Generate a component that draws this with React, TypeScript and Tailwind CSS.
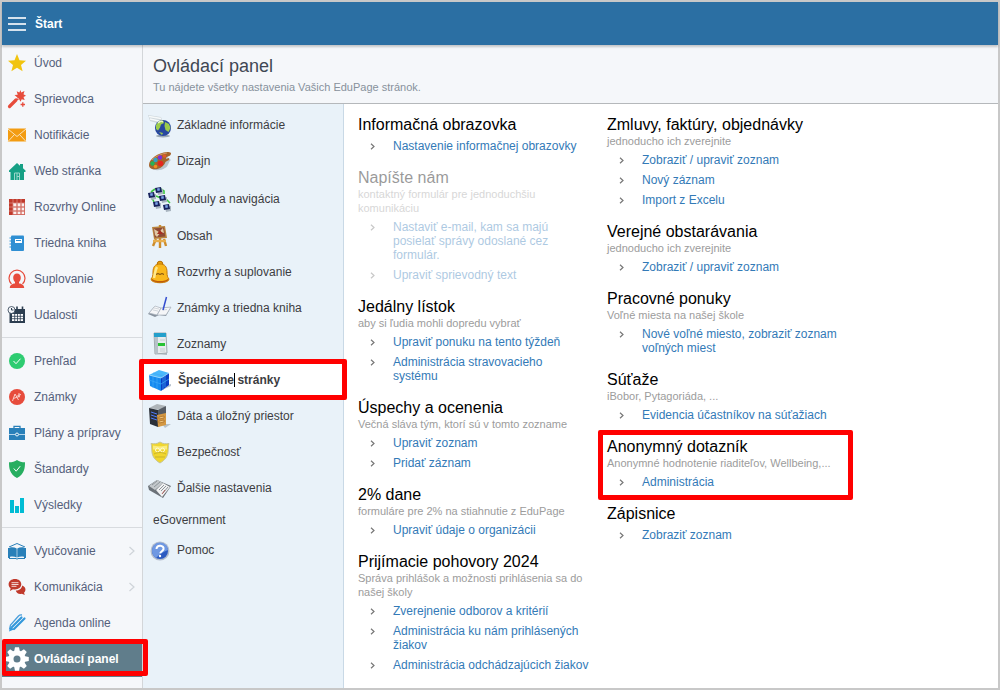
import type { ReactNode } from 'react'
import clsx from 'clsx'

type NavItem = { label: string; icon: ReactNode; active?: boolean; arrow?: boolean }
type MenuItem = { label: ReactNode; icon?: ReactNode; height: string; active?: boolean }
type Section = { title: string; desc?: string; links: string[]; muted?: boolean; marked?: boolean }

function Small({ children }: { children: ReactNode }) {
  return (
    <svg viewBox="0 0 18 18" className="h-[18px] w-[18px] shrink-0 overflow-visible" fill="none" aria-hidden="true">
      {children}
    </svg>
  )
}

function Large({ children }: { children: ReactNode }) {
  return (
    <svg viewBox="0 0 24 24" className="h-6 w-6 shrink-0 overflow-visible" fill="none" aria-hidden="true">
      {children}
    </svg>
  )
}

function Mark({ className }: { className: string }) {
  return <span className={clsx('pointer-events-none absolute z-10 rounded-[2px] border-[#f00]', className)} />
}

const teeth = [0, 45, 90, 135, 180, 225, 270, 315]

const navGroups: NavItem[][] = [
  [
    {
      label: 'Úvod',
      icon: (
        <Small>
          <path d="M9 0l2.500 6.200 6.500.5-5 4.200 1.600 6.400L9 13.800l-5.600 3.500L5 10.900 0 6.700l6.500-.5z" fill="#f1c40f" />
        </Small>
      ),
    },
    {
      label: 'Sprievodca',
      icon: (
        <Small>
          <path d="M1.500 16.500L8 10" stroke="#e74c3c" strokeWidth="3.200" strokeLinecap="round" />
          <path d="M12.500 0l.7 2.600L16.500 1l-1 3.300 2.500 1.500-2.500 1.200 1.200 3-3-.8-1.200 2.600-1.300-2.500-3 1.200.9-3.200L6.500 5l3.200-.3L8.700 1.300l2.600 1.200z" fill="#e74c3c" />
          <path d="M9 7.500l1.500 1.500" stroke="#f5f7fa" />
          <path d="M14.800 12.300v4.400M12.600 14.500H17" stroke="#e74c3c" strokeWidth="1.300" />
        </Small>
      ),
    },
    {
      label: 'Notifikácie',
      icon: (
        <Small>
          <path d="M0 2.500h18v13H0z" fill="#f39c12" />
          <path d="M0 3l9 7.500L18 3M0 15.500l6.500-7M18 15.500l-6.500-7" stroke="#fbe3b9" strokeWidth="1" />
        </Small>
      ),
    },
    {
      label: 'Web stránka',
      icon: (
        <Small>
          <path d="M1 8.500L9 1l3 2.700V2h3v4.300L17.500 8.500v1.500H16v8H2.500V10H1z" fill="#16a085" />
          <path d="M6.500 18v-7h5v7M9 11v7M9 14.500h2.500" stroke="#9bd6c9" strokeWidth="1" />
        </Small>
      ),
    },
    {
      label: 'Rozvrhy Online',
      icon: (
        <Small>
          <path d="M1 1h16v16H1z" fill="#f3d5d2" />
          <path d="M1 1h16v4H1zM1 1h4v16H1z" fill="#c0392b" />
          <path d="M1 5h16M1 9h16M1 13h16M5 1v16M9 1v16M13 1v16" stroke="#e3a39c" strokeWidth=".6" />
          <path d="M6 6h2v2H6zM10 6h2v2h-2zM14 6h2v2h-2zM6 10h2v2H6zM10 10h2v2h-2zM14 10h2v2h-2zM6 14h2v2H6zM10 14h2v2h-2zM14 14h2v2h-2z" fill="#faf0ef" />
          <path d="M5 9h12M5 13h12M9 5v12M13 5v12M16.500 5v12M5 16.500h12" stroke="#d0675c" strokeWidth=".9" />
        </Small>
      ),
    },
    {
      label: 'Triedna kniha',
      icon: (
        <Small>
          <rect x="3" y="1.500" width="13" height="15.500" rx="1" fill="#2f8fd3" />
          <path d="M1.500 4h3M1.500 7h3M1.500 10h3M1.500 13h3" stroke="#2f8fd3" strokeWidth="1.200" />
          <path d="M7 5h7v4H7z" fill="#fff" />
          <path d="M8 6.500h5" stroke="#2f8fd3" />
        </Small>
      ),
    },
    {
      label: 'Suplovanie',
      icon: (
        <Small>
          <path d="M3.500 14A8 8 0 1 1 14.500 14" stroke="#e74c3c" strokeWidth="1.200" />
          <path d="M9 3.500c2.500 0 3.800 1.700 3.800 4.200 0 1.800-.8 3.300-1.800 4.300v1.500c2.500 0 5.200 1.500 5.200 4.500H1.800c0-3 2.700-4.500 5.200-4.500V12c-1-1-1.800-2.500-1.800-4.300 0-2.500 1.300-4.200 3.800-4.200z" fill="#e74c3c" />
        </Small>
      ),
    },
    {
      label: 'Udalosti',
      icon: (
        <Small>
          <path d="M1.500 3H17v14H1.500z" fill="#2c3e50" />
          <path d="M9 .5v3M14.500 .5v3" stroke="#2c3e50" strokeWidth="1.600" />
          <path d="M4 8h11v7H4z" fill="#fff" />
          <path d="M4 10.300h11M4 12.700h11M6.700 8v7M9.500 8v7M12.300 8v7" stroke="#2c3e50" strokeWidth=".8" />
          <circle cx="3.500" cy="4" r="3.500" fill="#f5f7fa" stroke="#2c3e50" strokeWidth=".8" />
          <path d="M3.500 2v2h2" stroke="#2c3e50" />
        </Small>
      ),
    },
  ],
  [
    {
      label: 'Prehľad',
      icon: (
        <Small>
          <circle cx="9" cy="9" r="8" fill="#2ecc71" />
          <path d="M5.500 9l2.500 2.700 4.500-5" stroke="#fff" strokeWidth="1" />
        </Small>
      ),
    },
    {
      label: 'Známky',
      icon: (
        <Small>
          <circle cx="9" cy="9" r="8" fill="#e74c3c" />
          <path d="M4.500 13l2.500-7 3.500 6M5.500 10.500L12 8M11 5v4.500M9.500 7.500L13 6.500" stroke="#fbd9d5" strokeWidth=".9" />
        </Small>
      ),
    },
    {
      label: 'Plány a prípravy',
      icon: (
        <Small>
          <path d="M6 4.500V2.300h6v2.200" stroke="#2980b9" strokeWidth="1.300" />
          <path d="M1 4h16v12H1z" fill="#2980b9" />
          <path d="M1 10.500h6M11 10.500h6" stroke="#c5deef" strokeWidth=".9" />
          <circle cx="9" cy="10.500" r="1.500" stroke="#fff" strokeWidth=".9" />
        </Small>
      ),
    },
    {
      label: 'Štandardy',
      icon: (
        <Small>
          <path d="M9 0c2 1.700 5 2.300 8 2.300 0 6-.5 11.700-8 15.700C1.500 14 1 8.300 1 2.300 4 2.300 7 1.700 9 0z" fill="#27ae60" />
          <path d="M5.800 8.500l2.400 2.700 4-5" stroke="#fff" strokeWidth="1" />
        </Small>
      ),
    },
    {
      label: 'Výsledky',
      icon: (
        <Small>
          <path d="M2 4h4v13H2zM7 10h4v7H7zM12 2h4v15h-4z" fill="#00bcd4" />
        </Small>
      ),
    },
  ],
  [
    {
      label: 'Vyučovanie',
      arrow: true,
      icon: (
        <Small>
          <path d="M1 5l8-3.500L17 5" stroke="#2980b9" />
          <path d="M0 6h2v10H0zM16 6h2v10h-2z" fill="#2980b9" />
          <path d="M2 5.500c2.500-.5 4.800 0 6.700 1v9c-2-1-4-1.300-6.700-.8zM16 5.500c-2.500-.5-4.800 0-6.700 1v9c2-1 4-1.300 6.700-.8z" fill="#2980b9" />
          <path d="M1 16.500h7l1 .7 1-.7h7" stroke="#2980b9" />
        </Small>
      ),
    },
    {
      label: 'Komunikácia',
      arrow: true,
      icon: (
        <Small>
          <path d="M7 1c3.600 0 6.300 2.200 6.300 5.300S10.600 11.500 7 11.500c-.8 0-1.500 0-2-.2L2 13l.6-2.800C1.300 9.300.6 8 .6 6.300.6 3.200 3.400 1 7 1z" fill="#c0392b" />
          <path d="M3.500 4.700h7M3.500 6.500h7M3.500 8.300h5" stroke="#fff" strokeWidth=".8" />
          <path d="M14.200 7.500c4 1.500 4 5.500 1.800 7.200l.8 2.300-3-1.200c-3 .7-5.700-.8-6-3.200 3.200 0 6.100-2 6.400-5.100z" fill="#c0392b" />
        </Small>
      ),
    },
    {
      label: 'Agenda online',
      icon: (
        <Small>
          <path d="M1.500 15.500L2.500 11l8-9c1-1 2-1.300 3.500-1" stroke="#4a9fdc" strokeWidth="1.300" />
          <path d="M1 17.500l1.500-5L6 15.500z" fill="#3498db" />
          <path d="M4 13L13.500 3.500M6 15L16.500 4.500" stroke="#3498db" strokeWidth="2.200" strokeLinecap="round" />
          <path d="M5.500 13.500l9.500-9.500" stroke="#cfe7f7" strokeWidth=".8" />
        </Small>
      ),
    },
    {
      label: 'Ovládací panel',
      active: true,
      icon: (
        <Small>
          {teeth.map((a) => (
            <path key={a} d="M6 2L7-2.800h4l1 4.800z" fill="#fff" transform={`rotate(${a} 9 9)`} />
          ))}
          <circle cx="9" cy="9" r="6" stroke="#fff" strokeWidth="5" />
        </Small>
      ),
    },
  ],
]

const menu: MenuItem[] = [
  {
    label: 'Základné informácie',
    height: 'h-9',
    icon: (
      <Large>
        <path d="M0 2l13 2 3 8-14-4z" fill="#cfd8dd" />
        <path d="M1 3.500l12 2M2 6l11 2.500" stroke="#f6f9fa" strokeWidth="1.500" />
        <ellipse cx="15" cy="23" rx="7" ry="1.500" fill="#9aa9b5" />
        <circle cx="15" cy="15" r="8" fill="#27479f" />
        <path d="M8 12c2-4 5-5 7-4.500l1 2.500-3 1.500-1 3-2 3-2-1.500zM17 9l4 2 1.500 4-2 4-3-2-1-4zM11 19l4 1-1 2z" fill="#9ccc4b" />
        <path d="M10 10c2-2 4-2 5-1" stroke="#e8f5c8" strokeWidth="1.500" />
      </Large>
    ),
  },
  {
    label: 'Dizajn',
    height: 'h-9',
    icon: (
      <Large>
        <path d="M3 19c2 3 10 3 14 0 4-2 3-6 6-8l-4-3z" fill="#b8c3cb" />
        <path d="M1 16C1 10 10 3.500 19 3c4 0 5 1 3 3.500-2 1.500-4 1-4 3.500l3-1c1 2-2 3-3.500 4-1 3-4 6-8 7s-8.500 0-8.500-4z" fill="#a5642c" />
        <path d="M4 11c4-4 9-6 15-7" stroke="#d69a60" />
        <circle cx="12" cy="8.500" r="2.200" fill="#7a2ce2" />
        <circle cx="7.500" cy="11" r="2.200" fill="#2fa2c8" />
        <circle cx="4.500" cy="14.500" r="2.200" fill="#23b457" />
        <circle cx="7.500" cy="17.500" r="1.800" fill="#f28f1f" />
        <circle cx="12.500" cy="14.500" r="2.800" fill="#e5261f" />
        <circle cx="16.500" cy="7" r="1.700" fill="#e2592b" />
      </Large>
    ),
  },
  {
    label: 'Moduly a navigácia',
    height: 'h-[39px]',
    icon: (
      <Large>
        <path d="M3 5l4-3M13 2l3 2v3M8 9l5 2M18 12l4 4M4 11l2 4" stroke="#3fc742" strokeWidth="1.600" />
        {[
          [7, 0],
          [0, 5],
          [11, 8],
          [5, 14],
          [15, 17],
        ].map(([x, y]) => (
          <g key={x} transform={`translate(${x} ${y})`}>
            <path d="M2 3l6-1v5l-5 1z" fill="#a9b5c0" />
            <path d="M0 1l6-1 1 5-6 1z" fill="#17225c" />
            <path d="M2 1.500l2.500-.5.5 2.500-2.500.5z" fill="#7ba1e6" />
          </g>
        ))}
      </Large>
    ),
  },
  {
    label: 'Obsah',
    height: 'h-9',
    icon: (
      <Large>
        <path d="M8 15L5 22M16 15l2 7M12 1v23" stroke="#cd8d2c" strokeWidth="2.400" />
        <path d="M4 3l13-1 2 12-13 1z" fill="#b98540" />
        <path d="M5.500 4.500l10.500-1 1.200 9-10.500 1z" fill="#8e4a35" />
        <path d="M6 5l5 3 4-4 1 5-3-1-4 5-2-2z" fill="#e0c9a5" />
        <path d="M9 10l3-4 3 4z" fill="#a62e22" />
        <path d="M5 17h13" stroke="#e7ae4e" strokeWidth="2.400" />
      </Large>
    ),
  },
  {
    label: 'Rozvrhy a suplovanie',
    height: 'h-9',
    icon: (
      <Large>
        <circle cx="12" cy="4" r="2.800" fill="#e9a30d" stroke="#b36b00" />
        <path d="M12 4c5 0 7 3 7 8 0 4 .5 5 2 7 0 5-18 5-18 0 1.500-2 2-3 2-7 0-5 2-8 7-8z" fill="#f9b81c" stroke="#c57a08" />
        <path d="M9 7c-2 3-2 7-3 11" stroke="#ffe88b" strokeWidth="2.500" />
        <path d="M4 19.500c3 3 13 3 16 0" stroke="#bf5b0a" strokeWidth="1.300" />
        <path d="M8 15l2-2 2 2 2-2 2 2M8 14h8" stroke="#8c5a11" strokeWidth=".8" />
      </Large>
    ),
  },
  {
    label: 'Známky a triedna kniha',
    height: 'h-9',
    icon: (
      <Large>
        <path d="M0 18l6-7 7 1 10-1-5 9-7-1-4 2z" fill="#87929e" />
        <path d="M1 17l6-7 6 2-4 7c-3-1-5-1-8-2zM13 12l10-1-5 8-9 0z" fill="#f5f6f8" stroke="#aab3bd" strokeWidth=".7" />
        <path d="M6 12l5 1M5 14l5 1M14 14l5-.5" stroke="#c3cad0" strokeWidth=".7" />
        <path d="M18.500 1l-3.500 13" stroke="#344dcf" strokeWidth="1.500" />
      </Large>
    ),
  },
  {
    label: 'Zoznamy',
    height: 'h-9',
    icon: (
      <Large>
        <path d="M8 20l11 1v2L8 22z" fill="#aebac3" />
        <path d="M6 1h12l1 20-12 1z" fill="#e6ebed" stroke="#a0abb0" />
        <path d="M6 1h12v4H6z" fill="#239fcb" />
        <path d="M7 5h3v16H7z" fill="#b7c2c9" />
        <path d="M10 11h7v3h-7z" fill="#27c233" />
        <path d="M12 8h5M12 17h5M12 19h5" stroke="#c5ced2" />
      </Large>
    ),
  },
  {
    label: (
      <span className="pl-px font-bold">
        Špeciálne
        <span className="relative">
          <span className="absolute left-0 top-0 h-[14px] w-px bg-black" />
        </span>{' '}
        stránky
      </span>
    ),
    height: 'h-9',
    active: true,
    icon: (
      <Large>
        <path d="M14 22l9-4v-2l-8 2z" fill="#bac4cf" />
        <path d="M1 7l10-5 10 3-8 5z" fill="#49b7fb" />
        <path d="M1 7l12 3v13L2 18z" fill="#168af0" />
        <path d="M13 10l8-5v12l-8 6z" fill="#0b3fc4" />
        <path d="M1 12l12 4 8-5M5 5l10 3v14M5 8v12M9 9v12M17 7v12" stroke="#3fa9f7" strokeWidth=".7" />
        <path d="M1 7l12 3 8-5" stroke="#a9e0ff" strokeWidth=".7" />
      </Large>
    ),
  },
  {
    label: 'Dáta a úložný priestor',
    height: 'h-9',
    icon: (
      <Large>
        <path d="M14 20l9 0-6 4z" fill="#b6c2cb" />
        <path d="M1 4l8-4 9 2-5 4z" fill="#aeb4b8" />
        <path d="M1 4l9 2v17l-8-3z" fill="#2b3038" />
        <path d="M10 6l8-4v16l-8 5z" fill="#555b63" />
        <path d="M3 8l6 2M3 11l6 2M3 14l6 2" stroke="#4e79f5" />
        <path d="M9 11l9-2v12l-8 2z" fill="#d49843" />
        <path d="M11 13l5-1v2l-5 1zM11 17l5-1v2l-5 1z" fill="#f0c479" stroke="#a86c24" strokeWidth=".7" />
      </Large>
    ),
  },
  {
    label: 'Bezpečnosť',
    height: 'h-9',
    icon: (
      <Large>
        <path d="M12 2c3 2 6 2 9 1.500-2 6 2 13-9 19.500C1 16.500 5 9.500 3 3.500c3 .5 6 .5 9-1.500z" fill="#f0d62e" stroke="#c5c49a" />
        <path d="M5 5.500c4 1 10 1 14 0v4H5z" fill="#faec7c" />
        <circle cx="9.500" cy="10" r="2" stroke="#fffbd5" />
        <circle cx="14.500" cy="10" r="2" stroke="#fffbd5" />
        <path d="M6 14c4-2 8-2 12 0M7 17h10" stroke="#c9b32b" />
      </Large>
    ),
  },
  {
    label: 'Ďalšie nastavenia',
    height: 'h-9',
    icon: (
      <Large>
        <path d="M0 10l9-6 14 6-8 12L1 14z" fill="#6b7278" />
        <path d="M1 10l8-6 6 3-8 7z" fill="#c3c8cb" />
        <path d="M8 14l7-7 7 4-8 10z" fill="#f0f1f2" />
        <path d="M4 9l5-4M6 11l6-5M11 14l5-5M13 15l5-5M15 17l5-6" stroke="#8d9499" />
        <path d="M14 18l3-4" stroke="#b0605c" />
      </Large>
    ),
  },
  { label: 'eGovernment', height: 'h-7' },
  {
    label: 'Pomoc',
    height: 'h-8',
    icon: (
      <Large>
        <circle cx="12" cy="13" r="9.500" fill="#b3bdcd" />
        <circle cx="12" cy="13" r="8" fill="#2c5ac0" />
        <path d="M4 13a8 8 0 0 1 16-1c-5 2-8 4-12 8-2-1-4-4-4-7z" fill="#6f98e2" />
        <path d="M8.500 11c0-5 8-4 7 .3-.5 2-3.200 2-3.200 4" stroke="#fff" strokeWidth="2" />
        <circle cx="12" cy="18" r="1.200" fill="#fff" />
      </Large>
    ),
  },
]

const columns: Section[][] = [
  [
    { title: 'Informačná obrazovka', links: ['Nastavenie informačnej obrazovky'] },
    {
      title: 'Napíšte nám',
      desc: 'kontaktný formulár pre jednoduchšiu komunikáciu',
      links: ['Nastaviť e-mail, kam sa majú posielať správy odoslané cez formulár.', 'Upraviť sprievodný text'],
      muted: true,
    },
    {
      title: 'Jedálny lístok',
      desc: 'aby si ľudia mohli dopredu vybrať',
      links: ['Upraviť ponuku na tento týždeň', 'Administrácia stravovacieho systému'],
    },
    {
      title: 'Úspechy a ocenenia',
      desc: 'Večná sláva tým, ktorí sú v tomto zozname',
      links: ['Upraviť zoznam', 'Pridať záznam'],
    },
    { title: '2% dane', desc: 'formuláre pre 2% na stiahnutie z EduPage', links: ['Upraviť údaje o organizácii'] },
    {
      title: 'Prijímacie pohovory 2024',
      desc: 'Správa prihlášok a možnosti prihlásenia sa do našej školy',
      links: [
        'Zverejnenie odborov a kritérií',
        'Administrácia ku nám prihlásených žiakov',
        'Administrácia odchádzajúcich žiakov',
      ],
    },
  ],
  [
    {
      title: 'Zmluvy, faktúry, objednávky',
      desc: 'jednoducho ich zverejnite',
      links: ['Zobraziť / upraviť zoznam', 'Nový záznam', 'Import z Excelu'],
    },
    { title: 'Verejné obstarávania', desc: 'jednoducho ich zverejnite', links: ['Zobraziť / upraviť zoznam'] },
    {
      title: 'Pracovné ponuky',
      desc: 'Voľné miesta na našej škole',
      links: ['Nové voľné miesto, zobraziť zoznam voľných miest'],
    },
    { title: 'Súťaže', desc: 'iBobor, Pytagoriáda, ...', links: ['Evidencia účastníkov na súťažiach'] },
    {
      title: 'Anonymný dotazník',
      desc: 'Anonymné hodnotenie riaditeľov, Wellbeing,...',
      links: ['Administrácia'],
      marked: true,
    },
    { title: 'Zápisnice', links: ['Zobraziť zoznam'] },
  ],
]

function Sidebar() {
  return (
    <nav className="w-[141px] shrink-0 border-r border-[#d3d6d9] bg-[#f5f7fa] text-[#54607a]">
      {navGroups.map((group, i) => (
        <ul key={i} className={clsx(i > 0 && 'mt-1 border-t border-[#d8dbdf] pt-[5px]')}>
          {group.map((item) => (
            <li key={item.label} className="relative">
              <a
                href="#"
                className={clsx(
                  'flex h-9 items-center gap-2 pl-[6px] pr-[7px]',
                  item.active && 'bg-[#607d8b] font-bold text-white',
                )}
              >
                {item.icon}
                <span className="grow">{item.label}</span>
                {item.arrow && (
                  <svg viewBox="0 0 6 10" className="h-[10px] w-[6px]" fill="none" aria-hidden="true">
                    <path d="M.5 1l4.500 4-4.500 4" stroke="#cfd4d9" strokeWidth="1.200" />
                  </svg>
                )}
              </a>
              {item.active && <Mark className="-right-[6px] -top-[2px] bottom-px left-0 border-[5px] border-l-[4px]" />}
            </li>
          ))}
        </ul>
      ))}
    </nav>
  )
}

function SettingsMenu() {
  return (
    <nav className="w-[201px] shrink-0 border-r border-[#c9d9e6] bg-[#e9f2f9] pt-[3px] text-[#3d3d42]">
      <ul>
        {menu.map((item, i) => (
          <li key={i} className="relative">
            <a
              href="#"
              className={clsx(
                'flex items-center gap-[5px]',
                item.height,
                item.icon ? 'pl-[5px]' : 'pl-[10px]',
                item.active && 'bg-white',
              )}
            >
              {item.icon}
              <span>{item.label}</span>
            </a>
            {item.active && <Mark className="-bottom-[2px] -left-1 -right-1 -top-[3px] border-[5px]" />}
          </li>
        ))}
      </ul>
    </nav>
  )
}

function SectionBlock({ section }: { section: Section }) {
  return (
    <section className="relative mb-[11px]">
      <div className={clsx(section.muted && 'opacity-40')}>
        <h2 className="h-5 text-base leading-[22px] text-black">{section.title}</h2>
        {section.desc && <p className="text-[11px] leading-[14px] text-[#9c9c9c]">{section.desc}</p>}
        <ul className="mt-[2px]">
          {section.links.map((link) => (
            <li key={link} className="flex py-[3px]">
              <span className="flex h-[14px] w-[35px] shrink-0 items-center pl-3">
                <svg viewBox="0 0 6 7" className="h-[7px] w-[6px]" fill="none" aria-hidden="true">
                  <path d="M1 .7l3 2.800-3 2.800" stroke="#777" strokeWidth="1.200" />
                </svg>
              </span>
              <a href="#" className="leading-[14px] text-[#337ab7]">
                {link}
              </a>
            </li>
          ))}
        </ul>
      </div>
      {section.marked && <Mark className="-bottom-2 -left-[9px] -right-[15px] -top-[6px] border-[5px]" />}
    </section>
  )
}

export default function App() {
  return (
    <div className="flex min-h-screen flex-col border-2 border-[#c8c8c8] bg-white font-['Liberation_Sans',Arial,sans-serif] text-xs">
      <header className="relative z-10 flex h-[43px] items-center gap-[9px] bg-[#2b6fa3] pl-[6px] text-white shadow-[0_2px_2px_#00000033]">
        <button type="button" aria-label="Menu" className="flex flex-col gap-1">
          <span className="h-[2px] w-[18px] bg-white/80" />
          <span className="h-[2px] w-[18px] bg-white/80" />
          <span className="h-[2px] w-[18px] bg-white/80" />
        </button>
        <span className="font-bold">Štart</span>
      </header>

      <div className="flex grow">
        <Sidebar />
        <div className="flex min-w-0 grow flex-col">
          <div className="h-[59px] border-b border-[#b5b8bb] bg-[#f5f7fa] pl-[10px] pt-[9px]">
            <h1 className="text-lg leading-6 text-[#3f4754]">Ovládací panel</h1>
            <p className="mt-[2px] text-[11px] leading-[14px] text-[#87919c]">
              Tu nájdete všetky nastavenia Vašich EduPage stránok.
            </p>
          </div>
          <div className="flex grow">
            <SettingsMenu />
            <main className="flex grow flex-wrap content-start pl-[14px] pt-[10px]">
              {columns.map((sections, i) => (
                <div key={i} className="w-[249px] pr-[18px]">
                  {sections.map((section) => (
                    <SectionBlock key={section.title} section={section} />
                  ))}
                </div>
              ))}
            </main>
          </div>
        </div>
      </div>
    </div>
  )
}
